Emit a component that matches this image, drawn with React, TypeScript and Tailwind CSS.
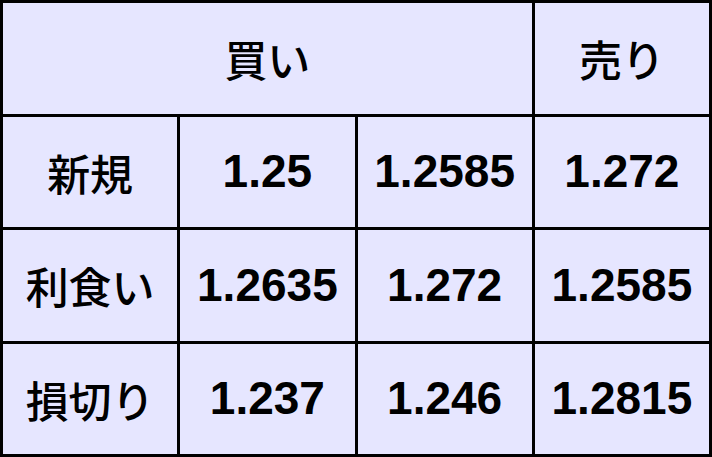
const rows: { label: string; values: string[] }[] = [
  { label: "新規", values: ["1.25", "1.2585", "1.272"] },
  { label: "利食い", values: ["1.2635", "1.272", "1.2585"] },
  { label: "損切り", values: ["1.237", "1.246", "1.2815"] },
];

const cell = "flex items-center justify-center bg-[#e6e6ff] text-black";
const jp = "font-['Noto_Sans_CJK_JP',sans-serif] text-[43px] font-medium";
const num = "font-['Liberation_Sans','Noto_Sans_CJK_JP',sans-serif] text-[46px] font-bold";

export default function App() {
  return (
    <div className="grid h-[457px] w-[712px] grid-cols-4 grid-rows-4 gap-[3px] bg-black p-[3px]">
      <div className={`${cell} ${jp} col-span-3`}>買い</div>
      <div className={`${cell} ${jp}`}>売り</div>
      {rows.map((row) => (
        <>
          <div key={row.label} className={`${cell} ${jp}`}>
            {row.label}
          </div>
          {row.values.map((v, i) => (
            <div key={row.label + i} className={`${cell} ${num}`}>
              {v}
            </div>
          ))}
        </>
      ))}
    </div>
  );
}
